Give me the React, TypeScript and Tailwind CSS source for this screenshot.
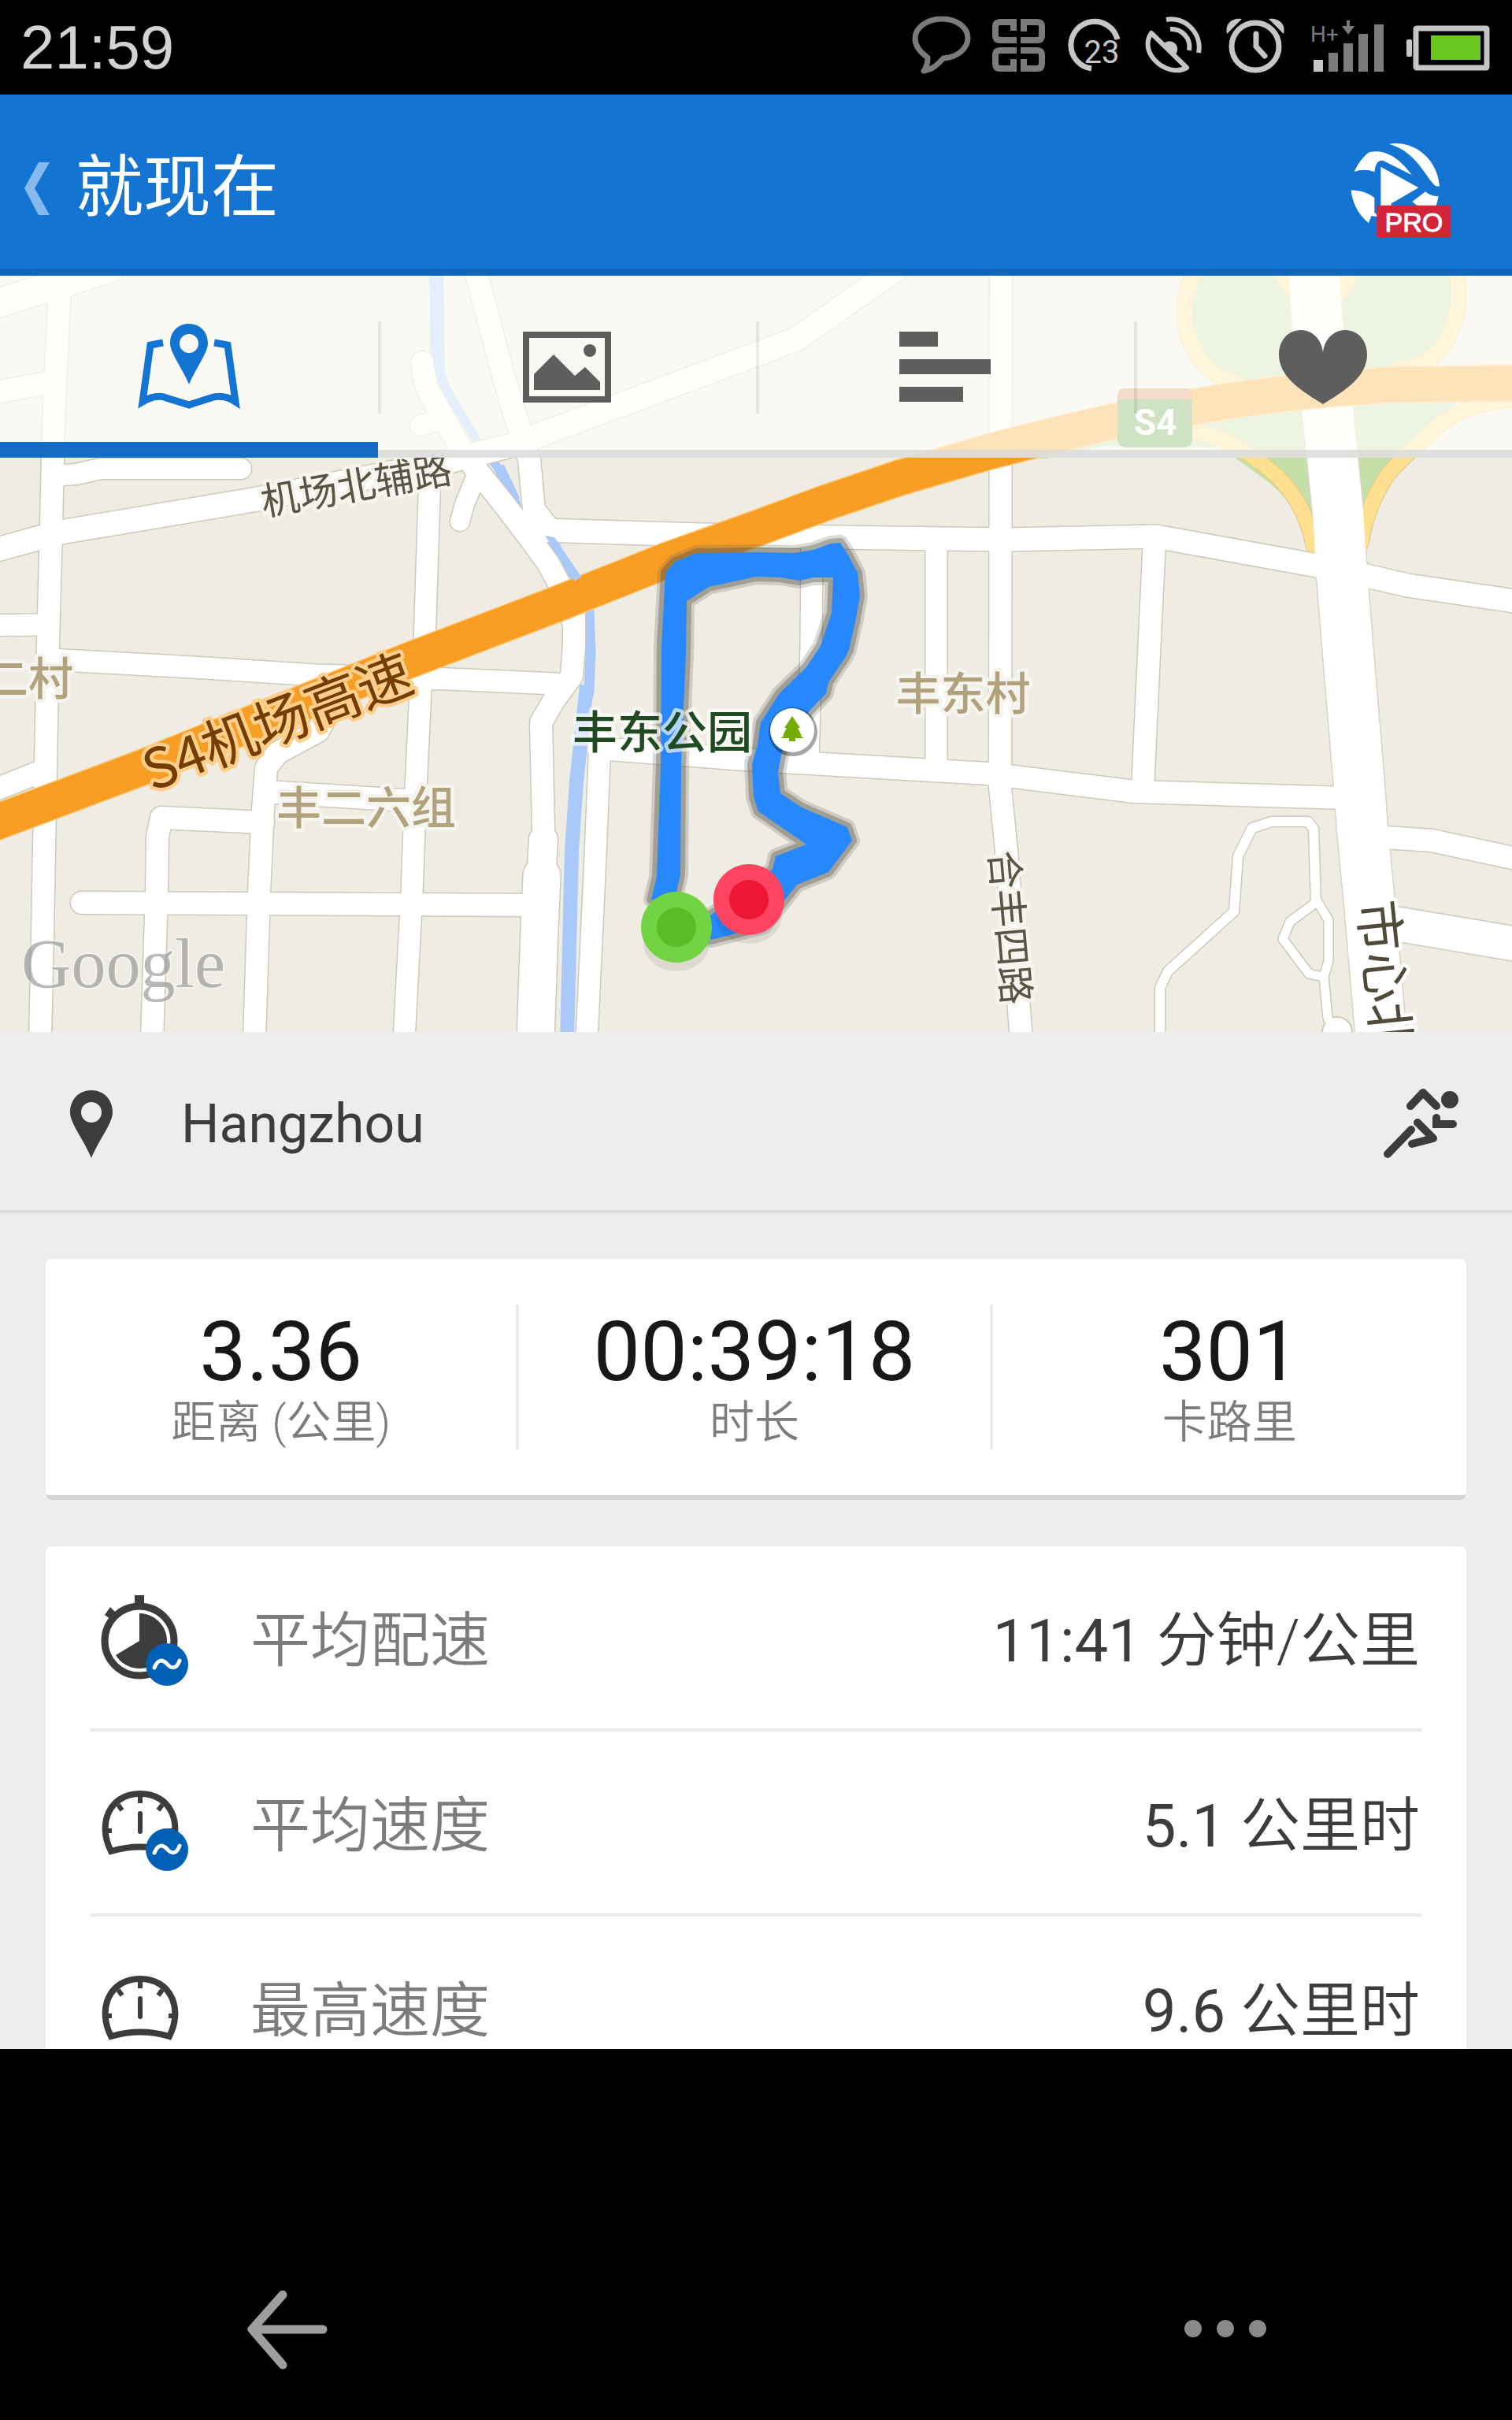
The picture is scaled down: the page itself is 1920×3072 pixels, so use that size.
import React, { useState } from 'react';
import { clsx } from 'clsx';

interface Road {
  d: string;
  width: number;
}

interface Metric {
  label: string;
  value: string;
  unit: string;
  icon: React.ReactNode;
}

// City streets, drawn twice: once as casing, once as fill
const STREETS: Road[] = [
  { d: 'M77 340 L75 383 L68 537 L65 667 L61 817 L58 970 L54 1187 L51 1320', width: 28 },
  { d: 'M-20 390 L0 384 L61 365 L140 340', width: 36 },
  { d: 'M-10 499 L65 485', width: 28 },
  { d: 'M66 604 L96 602 L128 595 L306 595', width: 26 },
  { d: 'M-20 702 L49 683 L80 675 L324 634 L560 588 L650 565 L960 450 L1012 430 L1140 340', width: 30 },
  { d: 'M-10 794 L50 793', width: 27 },
  { d: 'M546 600 L539 817 L534 877 L528 1000 L523 1133 L513 1320', width: 27 },
  { d: 'M729 770 L729 820 L726 858 L704 888 L687 917 L690 1053 L689 1080', width: 28 },
  { d: 'M690 1066 L688 1100', width: 36 },
  { d: 'M688 1112 L685 1180 L680 1320', width: 47 },
  { d: 'M762 940 L756 1087 L745 1320', width: 27 },
  { d: 'M603 340 L640 480 L661 550 L672 583 L678 647 L696 670', width: 28 },
  { d: 'M690 673 L888 679 L1060 682 L1278 685 L1468 681 L1667 717 L1735 731 L1787 743 L1930 764', width: 29 },
  { d: 'M536 460 L541 490 L560 525 L590 578 L612 605 L640 640 L672 682 L696 715 L714 748 L726 785', width: 28 },
  { d: 'M534 540 L560 532', width: 26 },
  { d: 'M604 606 L590 640 L584 662', width: 24 },
  { d: 'M61 837 L245 847 L400 857 L570 862 L705 868', width: 27 },
  { d: 'M-10 1004 L55 978', width: 28 },
  { d: 'M424 890 L404 928 L352 956 L338 975 L334 1027 L329 1133 L323 1320', width: 28 },
  { d: 'M338 1005 L530 1017', width: 28 },
  { d: 'M334 1044 L205 1038 L200 1062 L199 1133 L193 1320', width: 28 },
  { d: 'M104 1146 L678 1149', width: 28 },
  { d: 'M1031 690 L1030 820 L1026 966', width: 27 },
  { d: 'M1189 686 L1189 975', width: 27 },
  { d: 'M1271 340 L1270 1000 L1278 1080 L1297 1320', width: 28 },
  { d: 'M1466 684 L1459 830 L1451 1003', width: 28 },
  { d: 'M760 950 L960 965 L1254 982 L1441 1005 L1710 1013', width: 28 },
  { d: 'M1740 1060 L1760 1063 L1818 1067 L1930 1091', width: 28 },
  { d: 'M1745 1168 L1780 1174 L1930 1199', width: 43 },
  { d: 'M1671 1145 L1668 1052 L1661 1043 L1615 1043 L1590 1051 L1572 1087 L1567 1157 L1483 1233 L1473 1254 L1473 1320', width: 12 },
  { d: 'M1672 1145 L1638 1170 L1629 1192 L1662 1236 L1680 1240', width: 11 },
  { d: 'M1672 1143 L1687 1168 L1687 1220 L1681 1240 L1686 1292 L1700 1320', width: 11 },
];

const RAMPS = [
  'M1520 340 Q1484 404 1528 462 Q1545 480 1572 488',
  'M1848 340 Q1862 400 1828 446 Q1806 466 1774 470',
  'M1517 547 Q1570 560 1612 596 Q1656 632 1668 692',
  'M1930 506 Q1862 510 1828 540 Q1788 574 1764 600 Q1736 640 1728 690',
  'M1622 340 L1644 372',
  'M1718 340 L1702 372',
];

const AVENUE = 'M1668 340 L1673 413 L1686 523 L1699 650 L1704 730 L1712 830 L1726 997 L1730 1053 L1739 1147 L1754 1320';

const HIGHWAY =
  'M-20 1050 L0 1042 L184 973 L520 838 L704 768 L845 712 L960 671 L1052 637 L1144 606 L1254 574 Q1413 532 1511 517 Q1633 496 1756 489 L1930 486';

const TRACK =
  'M827 1142 L834 1113 L839 970 L840 820 L845 727 L857 713 L885 702 L960 701 L1009 702 L1033 698 L1055 690 L1067 689 L1076 703 L1089 727 L1092 757 L1086 790 L1078 825 L1073 835 L1052 866 L1049 880 L1030 900 L1012 922 L994 950 L988 980 L991 1007 L1018 1025 L1076 1050 L1082 1067 L1052 1107 L1012 1123 L997 1142 L970 1176 L903 1193 L890 1170 L950 1130 L981 1103 L985 1087 L1024 1072 L963 1030 L957 1012 L955 970 L962 945 L966 917 L990 880 L1024 847 L1042 820 L1056 778 L1058 733 L1033 733 L1015 737 L991 733 L960 732 L900 745 L872 763 L871 830 L865 970 L864 1110 L857 1142 Z';

const RouteMap: React.FC = () => (
  <svg viewBox="0 350 1920 960" className="block h-auto w-full" role="img" aria-label="路线地图">
    <rect x="0" y="350" width="1920" height="960" fill="#efece3" />

    {/* Parks around the interchange */}
    <path d="M1520 340 Q1484 404 1528 462 L1572 490 L1690 490 L1690 340 Z" fill="#c4dfa8" />
    <path d="M1690 340 L1848 340 Q1862 400 1828 446 L1770 480 L1690 490 Z" fill="#c4dfa8" />
    <path d="M1310 582 L1400 550 L1520 520 L1840 500 L1850 520 Q1760 590 1728 690 L1700 700 L1666 700 Q1652 640 1600 604 L1550 568 L1400 566 L1330 582 Z" fill="#c4dfa8" />

    {/* River */}
    <g fill="none" stroke="#a9c9fb" strokeLinejoin="round">
      <path d="M554 340 L556 477 L576 520" strokeWidth="18" />
      <path d="M570 500 L612 570 L631 592 L658 645" strokeWidth="11" />
      <path d="M698 680 L720 722 L748 776 L750 830 L748 878 L738 920" strokeWidth="13" />
      <path d="M745 870 L732 993 L726 1080 L720 1320" strokeWidth="18" />
    </g>

    <g fill="none" strokeLinecap="round" strokeLinejoin="round">
      {STREETS.map((road) => (
        <path key={road.d} d={road.d} stroke="#cdc9bb" strokeWidth={road.width + 3} />
      ))}
      {RAMPS.map((d) => (
        <path key={d} d={d} stroke="#e6cd8e" strokeWidth="21" />
      ))}
      <path d={AVENUE} stroke="#d8d4c4" strokeWidth="67" />
      <circle cx="1698" cy="1310" r="19" fill="#fff" stroke="#cdc9bb" strokeWidth="2" />
      {STREETS.map((road) => (
        <path key={road.d} d={road.d} stroke="#fff" strokeWidth={road.width} />
      ))}
      {RAMPS.map((d) => (
        <path key={d} d={d} stroke="#ffdf90" strokeWidth="18" />
      ))}
      <path d={AVENUE} stroke="#fff" strokeWidth="64" />
      <path d={HIGHWAY} stroke="#ffc36a" strokeWidth="47" />
      <path d={HIGHWAY} stroke="#f89d24" strokeWidth="44" />
    </g>

    {/* River where it shows beside the street */}
    <path d="M692 680 L704 682 L738 732 L730 738 Z M632 590 L640 590 L660 632 L657 640 Z" fill="#a9c9fb" />

    {/* Road shield */}
    <rect x="1419" y="493" width="95" height="75" rx="10" fill="#62a045" />
    <path d="M1419 507 V503 Q1419 493 1429 493 H1504 Q1514 493 1514 503 V507 Z" fill="#de8955" />
    <text x="1467" y="552" fontSize="46" fontWeight="700" textAnchor="middle" fill="#fff" className="font-['Roboto',sans-serif]">
      S4
    </text>

    {/* Recorded track */}
    <path d={TRACK} fill="none" stroke="#6b6a60" strokeOpacity="0.25" strokeWidth="20" strokeLinejoin="round" />
    <path d={TRACK} fill="none" stroke="#4a4a44" strokeOpacity="0.35" strokeWidth="12" strokeLinejoin="round" />
    <path d={TRACK} fill="#2688fc" />

    {/* Place names */}
    <g
      className="font-['Noto_Sans_CJK_SC',sans-serif]"
      strokeWidth="9"
      strokeLinejoin="round"
      textAnchor="middle"
      style={{ paintOrder: 'stroke' }}
    >
      <text transform="translate(452 615) rotate(-10)" y="19" fontSize="49" fill="#5a5444" stroke="#f6f4ee">
        机场北辅路
      </text>
      <text transform="translate(352 916) rotate(-21)" y="26" fontSize="70" fill="#743d02" stroke="#ffcf8b">
        S4机场高速
      </text>
      <text x="36" y="882" fontSize="57" fontWeight="500" fill="#b0a27c" stroke="#f6f4ee">
        二村
      </text>
      <text x="465" y="1046" fontSize="57" fontWeight="500" fill="#b0a27c" stroke="#f6f4ee">
        丰二六组
      </text>
      <text x="1223" y="901" fontSize="57" fontWeight="500" fill="#b0a27c" stroke="#f6f4ee">
        丰东村
      </text>
      <text x="841" y="950" fontSize="57" fontWeight="500" fill="#1f4a22" stroke="#fff" strokeOpacity="0.65">
        丰东公园
      </text>
      <text transform="translate(1284 1177) rotate(85)" y="19" fontSize="49" fill="#5a5444" stroke="#f6f4ee">
        合丰四路
      </text>
      <text transform="translate(1759 1240) rotate(84)" y="24" fontSize="65" fill="#4f4a3a" stroke="#fff">
        市心北
      </text>
    </g>

    {/* Park marker */}
    <circle cx="1007" cy="929" r="31" fill="#000" fillOpacity="0.35" />
    <circle cx="1006" cy="927" r="28" fill="#fff" />
    <path d="M1006 909 L1016 924 H1013 L1018 934 H1016 L1021 937 H1010 V941 H1002 V937 H991 L996 934 H994 L999 924 H996 Z" fill="#72ad00" />

    {/* Finish and start */}
    <ellipse cx="951" cy="1162" rx="42" ry="36" fill="#000" fillOpacity="0.08" />
    <ellipse cx="859" cy="1197" rx="42" ry="36" fill="#000" fillOpacity="0.08" />
    <circle cx="951" cy="1142" r="45" fill="#ff4462" />
    <circle cx="951" cy="1142" r="25" fill="#ef1534" />
    <circle cx="859" cy="1177" r="45" fill="#72d442" />
    <circle cx="859" cy="1177" r="25" fill="#59bd27" />

    <text x="27" y="1253" fontSize="88" fill="#8a8a8a" fillOpacity="0.6" stroke="#fff" strokeOpacity="0.5" strokeWidth="3" style={{ paintOrder: 'stroke' }} className="font-['Liberation_Serif',serif]">
      Google
    </text>
  </svg>
);

const StatusBar: React.FC = () => (
  <div className="flex h-[120px] items-center justify-between bg-black px-[26px]">
    <span className="font-['Liberation_Sans',sans-serif] text-[78px] leading-[120px] text-[#d2d2d2]">21:59</span>
    <div className="flex items-center gap-6">
      {/* Message */}
      <svg viewBox="1158 16 76 84" className="h-[84px] w-[76px]" fill="none" stroke="#7b7b7b" strokeWidth="7" strokeLinejoin="round">
        <path d="M1178 71 C1168 64 1162 56 1162 47 C1162 33 1177 22 1196 22 C1215 22 1229 33 1229 46 C1229 60 1215 71 1198 72 C1192 78 1186 86 1173 88 C1177 83 1178 78 1178 71 Z" />
      </svg>
      {/* Apps */}
      <svg viewBox="1258 16 72 84" className="h-[84px] w-[72px]" fill="none" stroke="#7b7b7b" strokeWidth="8">
        <path d="M1287 37 V26 H1270 Q1264 26 1264 32 V43 Q1264 49 1270 49 H1291" />
        <path d="M1300 38 V26 H1317 Q1323 26 1323 32 V43 Q1323 49 1317 49 H1296" />
        <path d="M1291 62 H1270 Q1264 62 1264 68 V79 Q1264 85 1270 85 H1287 V73" />
        <path d="M1296 62 H1317 Q1323 62 1323 68 V79 Q1323 85 1317 85 H1300 V73" />
      </svg>
      {/* 23 notifications */}
      <svg viewBox="1354 16 72 84" className="h-[84px] w-[72px]">
        <path d="M1419 48 A30 30 0 1 0 1386 85" fill="none" stroke="#c6c6c6" strokeWidth="7" />
        <text x="1399" y="78" fontSize="40" textAnchor="middle" fill="#c6c6c6" className="font-['Roboto',sans-serif]">
          23
        </text>
      </svg>
      {/* Satellite */}
      <svg viewBox="1450 16 80 84" className="h-[84px] w-[80px]" fill="none" stroke="#c6c6c6" strokeWidth="6" strokeLinejoin="round">
        <path d="M1462 40 L1507 84 C1494 91 1477 86 1466 74 C1456 63 1455 50 1462 40 Z" />
        <path d="M1478 53 A10 10 0 1 1 1492 68 Z" fill="#c6c6c6" stroke="none" />
        <path d="M1486 35 C1500 34 1513 46 1510 62" />
        <path d="M1481 23 C1504 18 1527 40 1522 65" />
      </svg>
      {/* Alarm */}
      <svg viewBox="1554 16 82 84" className="h-[84px] w-[82px]" fill="none" stroke="#c6c6c6" strokeWidth="7" strokeLinecap="round">
        <circle cx="1594" cy="57" r="30" />
        <path d="M1595 41 V57 L1606 69" />
        <path d="M1558 41 C1555 28 1565 20 1577 22 L1558 41 Z" fill="#c6c6c6" stroke="none" />
        <path d="M1630 41 C1633 28 1623 20 1611 22 L1630 41 Z" fill="#c6c6c6" stroke="none" />
      </svg>
      {/* Signal */}
      <svg viewBox="1660 16 100 84" className="h-[84px] w-[100px]" fill="#7b7b7b">
        <text x="1664" y="51" fontSize="28" className="font-['Roboto',sans-serif]">
          H+
        </text>
        <path d="M1710 24 h4 v7 h6 l-8 11 l-8 -11 h6 Z" />
        <rect x="1668" y="74" width="12" height="15" fill="#c6c6c6" />
        <rect x="1687" y="65" width="12" height="24" />
        <rect x="1706" y="53" width="12" height="36" />
        <rect x="1725" y="41" width="12" height="48" />
        <rect x="1745" y="29" width="12" height="60" />
      </svg>
      {/* Battery */}
      <svg viewBox="1784 16 110 84" className="h-[84px] w-[110px]">
        <rect x="1798" y="34" width="90" height="50" rx="1" fill="none" stroke="#c6c6c6" strokeWidth="7" />
        <rect x="1786" y="48" width="7" height="22" rx="2" fill="#c6c6c6" />
        <rect x="1817" y="43" width="63" height="31" fill="#68c81d" />
      </svg>
    </div>
  </div>
);

const ProLogo: React.FC = () => (
  <svg viewBox="340 155 390 375" className="mt-2 h-[125px] w-[130px]" role="img" aria-label="PRO">
    <g fill="#fff">
      <path d="M490 163 C590 148 675 225 682 325 L666 323 C625 285 595 195 490 163 Z" />
      <path d="M357 270 C372 235 395 208 414 195 C480 180 535 225 577 282 L466 226 C448 225 438 236 434 270 C410 260 380 260 357 270 Z" />
      <path d="M345 340 C375 338 410 350 434 368 V425 L443 432 V440 L422 437 L412 464 C375 435 350 390 345 340 Z" />
      <path d="M458 250 L602 330 L498 390 V400 H458 Z" />
      <path d="M578 383 L628 345 C640 355 660 364 678 362 C676 375 672 390 668 400 H600 Z" />
    </g>
    <rect x="443" y="397" width="282" height="124" rx="6" fill="#d3253a" />
    <text x="584" y="496" fontSize="102" textAnchor="middle" fill="#fff" stroke="#fff" strokeWidth="3" className="font-['Liberation_Sans',sans-serif]">
      PRO
    </text>
  </svg>
);

const AppHeader: React.FC = () => (
  <header className="flex h-[230px] items-center justify-between border-b-[9px] border-[#1165b9] bg-[#1375d1] pt-4 pr-[76px] pl-[30px]">
    <button type="button" aria-label="返回" className="flex items-center gap-8">
      <svg viewBox="30 201 34 68" className="h-[68px] w-[34px]" fill="#86baee">
        <path d="M49 202 H63 L44 235 L63 269 H49 L31 235 Z" />
      </svg>
      <h1 className="text-[86px] leading-[120px] text-white">就现在</h1>
    </button>
    <ProLogo />
  </header>
);

const TABS = [
  {
    id: 'map',
    label: '地图',
    icon: (
      <svg viewBox="175 411 130 110" className="h-[110px] w-[130px]" fill="none" stroke="currentColor" strokeWidth="9">
        <path d="M207 435 L191 438 L181 510 Q198 500 211 505 L240 514 L268 505 Q284 500 299 510 L289 438 L272 435" />
        <path
          d="M240 411 C226 411 216 421 216 436 C216 448 232 468 240 488 C248 468 264 448 264 436 C264 421 254 411 240 411 Z M240 424 A12 12 0 1 1 240 448 A12 12 0 1 1 240 424 Z"
          fill="currentColor"
          fillRule="evenodd"
          stroke="none"
        />
      </svg>
    ),
  },
  {
    id: 'photos',
    label: '照片',
    icon: (
      <svg viewBox="655 411 130 110" className="h-[110px] w-[130px]" fill="currentColor">
        <rect x="668" y="425" width="104" height="82" fill="none" stroke="currentColor" strokeWidth="8" />
        <path d="M678 475 L703 450 L730 477 L743 466 L762 485 V495 H678 Z" />
        <circle cx="749" cy="445" r="8" />
      </svg>
    ),
  },
  {
    id: 'splits',
    label: '分段',
    icon: (
      <svg viewBox="1135 411 130 110" className="h-[110px] w-[130px]" fill="currentColor">
        <rect x="1142" y="421" width="49" height="19" />
        <rect x="1142" y="456" width="116" height="19" />
        <rect x="1142" y="491" width="81" height="19" />
      </svg>
    ),
  },
  {
    id: 'heart',
    label: '心率',
    icon: (
      <svg viewBox="1615 411 130 110" className="h-[110px] w-[130px]" fill="currentColor">
        <path d="M1680 447 C1678 430 1666 419 1652 419 C1635 419 1624 433 1624 450 C1624 479 1654 497 1680 513 C1706 497 1736 479 1736 450 C1736 433 1725 419 1708 419 C1694 419 1682 430 1680 447 Z" />
      </svg>
    ),
  },
];

const TabBar: React.FC = () => {
  const [active, setActive] = useState('map');

  return (
    <nav className="absolute inset-x-0 top-0 grid h-[231px] grid-cols-4 bg-[#fffffb]/70" role="tablist">
      {TABS.map((tab, i) => (
        <button
          key={tab.id}
          type="button"
          role="tab"
          aria-label={tab.label}
          aria-selected={active === tab.id}
          onClick={() => setActive(tab.id)}
          className={clsx(
            'relative flex items-center justify-center',
            active === tab.id ? 'text-[#1375d1]' : 'text-[#5e5e5e]',
          )}
        >
          {tab.icon}
          {i > 0 && <span className="absolute top-[58px] left-0 h-[117px] w-1 bg-black/8" />}
          <span
            className={clsx(
              'absolute inset-x-0 bottom-0',
              active === tab.id ? 'h-5 bg-[#146cc4]' : 'h-[10px] bg-[#d8d8d8]/80',
            )}
          />
        </button>
      ))}
    </nav>
  );
};

const LocationRow: React.FC = () => (
  <div className="flex h-[230px] items-center border-b-4 border-[#dcdcdc] pt-2 pr-[65px] pl-[88px] text-[#3c3c3c]">
    <svg viewBox="88 1380 56 90" className="h-[90px] w-14" fill="currentColor">
      <path
        fillRule="evenodd"
        d="M116 1382 C100 1382 89 1394 89 1410 C89 1424 106 1444 116 1468 C126 1444 143 1424 143 1410 C143 1394 132 1382 116 1382 Z M116 1397 A13 13 0 1 1 116 1423 A13 13 0 1 1 116 1397 Z"
      />
    </svg>
    <span className="ml-[86px] flex-1 text-[68px] leading-[96px]">Hangzhou</span>
    <svg viewBox="1756 1380 100 94" className="h-[94px] w-[100px]" fill="none" stroke="currentColor" strokeWidth="10" strokeLinecap="round" strokeLinejoin="round">
      <circle cx="1842" cy="1396" r="11" fill="currentColor" stroke="none" />
      <path d="M1792 1404 L1808 1387 L1825 1404" />
      <path d="M1825 1419 V1427 H1846" strokeLinejoin="miter" />
      <path d="M1801 1425 L1821 1445 L1794 1452" />
      <path d="M1793 1434 L1763 1465" />
    </svg>
  </div>
);

const SUMMARY = [
  { value: '3.36', label: '距离 (公里)' },
  { value: '00:39:18', label: '时长' },
  { value: '301', label: '卡路里' },
];

const SummaryCard: React.FC = () => (
  <dl className="grid grid-cols-3 rounded-lg border-b-6 border-[#d5d5d5] bg-white py-[58px]">
    {SUMMARY.map((item) => (
      <div
        key={item.label}
        className="flex h-[184px] flex-col-reverse items-center justify-center border-r-4 border-[#ebebeb] pt-3 last:border-r-0"
      >
        <dt className="text-[57px] leading-[76px] font-[350] text-[#7c7c7c]">{item.label}</dt>
        <dd className="text-[106px] leading-[104px] text-[#181818]">{item.value}</dd>
      </div>
    ))}
  </dl>
);

const AverageBadge: React.FC = () => (
  <g>
    <circle cx="213" cy="2113" r="27" fill="#0060b5" />
    <path d="M197 2117 C202 2105 208 2107 213 2112 C218 2118 225 2120 229 2108" fill="none" stroke="#fff" strokeWidth="5" strokeLinecap="round" />
  </g>
);

const StopwatchIcon: React.FC = () => (
  <svg viewBox="127 2023 120 120" className="size-[120px]">
    <circle cx="178" cy="2083" r="44" fill="none" stroke="#3c3c3c" strokeWidth="9" />
    <rect x="172" y="2025" width="12" height="14" fill="#3c3c3c" />
    <path d="M134 2050 L141 2040 L150 2049 L142 2056 Z" fill="#3c3c3c" />
    <path d="M178 2083 V2048 A35 35 0 1 1 148 2101 Z" fill="#3c3c3c" />
    <AverageBadge />
  </svg>
);

const GaugeIcon: React.FC<{ average?: boolean }> = ({ average = false }) => (
  <svg viewBox="127 2023 120 120" className="size-[120px]">
    <g fill="none" stroke="#3c3c3c" strokeWidth="8" strokeLinejoin="miter">
      <path d="M142 2115 C124 2080 140 2042 179 2042 C218 2042 234 2080 216 2115 Q179 2104 142 2115 Z" />
      <path d="M179 2042 V2054 M151 2056 L156 2063 M207 2056 L202 2063 M134 2089 H143 M224 2089 H215" strokeWidth="6" />
      <path d="M179 2067 V2090" strokeWidth="6" strokeLinecap="round" />
    </g>
    {average && <AverageBadge />}
  </svg>
);

const METRICS: Metric[] = [
  { label: '平均配速', value: '11:41', unit: '分钟/公里', icon: <StopwatchIcon /> },
  { label: '平均速度', value: '5.1', unit: '公里时', icon: <GaugeIcon average /> },
  { label: '最高速度', value: '9.6', unit: '公里时', icon: <GaugeIcon /> },
];

const MetricList: React.FC = () => (
  <dl className="rounded-t-lg bg-white px-[57px]">
    {METRICS.map((metric) => (
      <div
        key={metric.label}
        className="flex h-[235px] items-center border-b-4 border-[#ebebeb] pt-2 pr-[2px] pl-[11px] text-[76px] leading-[110px] font-[350]"
      >
        {metric.icon}
        <dt className="ml-[72px] flex-1 text-[#7c7c7c]">{metric.label}</dt>
        <dd className="text-[#3c3c3c]">
          <span className="font-normal">{metric.value} </span>
          {metric.unit}
        </dd>
      </div>
    ))}
  </dl>
);

const SystemNav: React.FC = () => (
  <footer className="flex items-center justify-between bg-black px-[312px] pt-[304px] pb-16">
    <button type="button" aria-label="返回">
      <svg viewBox="312 2906 106 104" className="h-[104px] w-[106px]" fill="none" stroke="#9e9e9e" strokeWidth="11" strokeLinecap="round" strokeLinejoin="round">
        <path d="M359 2914 L320 2958 L359 3003 M322 2958 H410" />
      </svg>
    </button>
    <button type="button" aria-label="更多">
      <svg viewBox="1504 2905 104 104" className="h-[104px] w-[104px]" fill="#898989">
        <circle cx="1515" cy="2956" r="11" />
        <circle cx="1556" cy="2956" r="11" />
        <circle cx="1597" cy="2956" r="11" />
      </svg>
    </button>
  </footer>
);

export default function App() {
  return (
    <div className="min-h-screen w-full bg-black font-['Roboto','Noto_Sans_CJK_SC',sans-serif]">
      <StatusBar />
      <AppHeader />
      <main className="bg-[#ededed]">
        <section className="relative">
          <RouteMap />
          <TabBar />
        </section>
        <LocationRow />
        <section className="flex h-[1061px] flex-col gap-[59px] overflow-hidden px-[58px] pt-[58px]">
          <SummaryCard />
          <MetricList />
        </section>
      </main>
      <SystemNav />
    </div>
  );
}
